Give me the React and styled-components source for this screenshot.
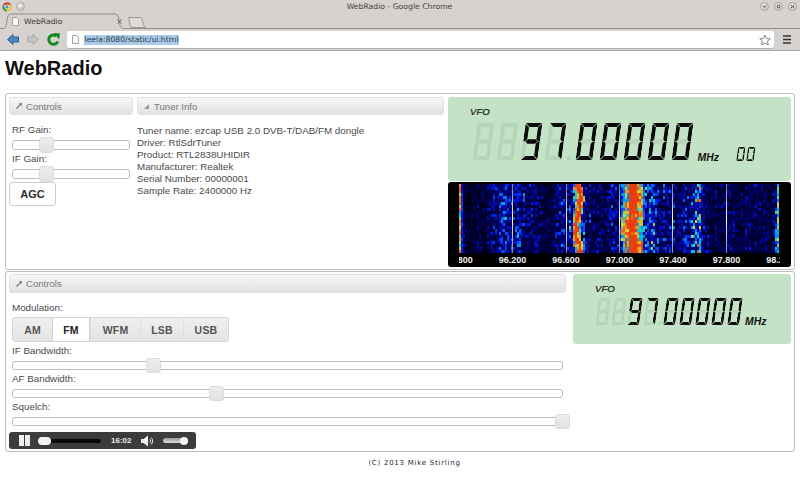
import React from "react";
import styled, { createGlobalStyle } from "styled-components";

const GlobalStyle = createGlobalStyle`
  html, body {
    margin: 0;
    height: 100%;
    overflow: hidden;
    background: #fff;
    font-family: "Liberation Sans", Arial, sans-serif;
    color: #333;
  }
  * { box-sizing: border-box; }
`;

/* ---------- browser chrome ---------- */

const Browser = styled.div`
  background: #d6d2cf;
  font-family: "DejaVu Sans", sans-serif;
  color: #3c3b3a;
`;

const TitleBar = styled.div`
  height: 13px;
  display: flex;
  align-items: center;
  padding: 0 3px 0 2px;
  position: relative;
`;

const WindowTitle = styled.div`
  flex: 1;
  padding-left: 19px;
  text-align: center;
  font-size: 7.7px;
  line-height: 13px;
  color: #444;
`;

const CircleButton = styled.span`
  width: 9px;
  height: 9px;
  border-radius: 50%;
  background: radial-gradient(circle at 40% 35%, #f4f2f0, #b9b5b2);
  border: 1px solid #aaa6a3;
  display: flex;
  align-items: center;
  justify-content: center;
  margin-left: ${(p) => p.$left || 5}px;
`;

const TabStrip = styled.div`
  height: 16px;
  display: flex;
  align-items: flex-end;
  padding-left: 2px;
  border-bottom: 1px solid #8f8b88;
`;

const Tab = styled.div`
  position: relative;
  width: 124px;
  height: 16px;
  margin-bottom: -1px;
  display: flex;
  align-items: center;
  gap: 5px;
  padding: 0 4px 0 10px;
  font-size: 7.7px;
  svg.shape { position: absolute; left: 0; top: 0; }
  svg.fav, span { position: relative; }
  span { flex: 1; }
`;

const Toolbar = styled.div`
  height: 22px;
  display: flex;
  align-items: center;
  padding: 0 9px 0 7px;
  border-bottom: 1px solid #a9a6a3;
`;

const Omnibox = styled.div`
  flex: 1;
  height: 17px;
  margin: 0 9px 0 7px;
  background: #fff;
  border-radius: 2px;
  box-shadow: 0 1px 0 #b5b2af;
  display: flex;
  align-items: center;
  padding: 0 3px 0 5px;
  gap: 5px;
`;

const Url = styled.span`
  background: #a9cbe9;
  color: #2b3a48;
  font-size: 7.7px;
  line-height: 10px;
  padding: 0 0.5px;
`;

const Spacer = styled.div`
  flex: 1;
`;

const ToolIcon = styled.svg`
  display: block;
  margin-right: ${(p) => p.$right || 0}px;
`;

/* ---------- page ---------- */

const Page = styled.div`
  padding: 0 5px;
`;

const Title = styled.h1`
  margin: 0 0 8px;
  height: 34px;
  line-height: 34px;
  font-size: 20px;
  font-weight: bold;
  color: #111;
`;

const Panel = styled.section`
  height: ${(p) => p.$height}px;
  margin-bottom: 1px;
  border: 1px solid #bdbdbd;
  border-radius: 3px;
  padding: ${(p) => p.$pad};
  display: flex;
  gap: ${(p) => p.$gap}px;
  position: relative;
`;

const Column = styled.div`
  width: ${(p) => p.$width}px;
  flex: none;
  display: flex;
  flex-direction: column;
  gap: ${(p) => p.$gap || 0}px;
`;

const SectionHeader = styled.div`
  height: ${(p) => p.$height || 18}px;
  flex: none;
  display: flex;
  align-items: center;
  gap: 4px;
  padding-left: 6px;
  border: 1px solid #e0e0e0;
  border-radius: 3px;
  background: linear-gradient(#f7f7f7, #ececec 50%, #e2e2e2);
  color: #7a7a7a;
  font-size: 9.6px;
`;

const Form = styled.div`
  padding: ${(p) => p.$top}px 3px 0;
`;

const FieldLabel = styled.div`
  height: 12px;
  line-height: 12px;
  font-size: 9.8px;
  color: #4a4a4a;
`;

const Track = styled.div`
  position: relative;
  height: ${(p) => p.$height}px;
  margin: 4px 0 3px;
  border: 1px solid #bdbdbd;
  border-radius: 3px;
  background: #fff;
`;

const Handle = styled.span`
  position: absolute;
  top: -4px;
  bottom: -4px;
  width: 15px;
  margin-left: -7.5px;
  border: 1px solid #dcdcdc;
  border-radius: 3px;
  background: linear-gradient(#ededed, #e2e2e2);
`;

const AgcButton = styled.button`
  display: block;
  width: 47px;
  height: 24px;
  margin-left: -3px;
  padding: 0;
  border: 1px solid #cfcfcf;
  border-radius: 3px;
  background: #fff;
  color: #2e2e2e;
  font: bold 11px "Liberation Sans", sans-serif;
`;

const TunerInfo = styled.div`
  padding-top: 10px;
  font-size: 9.8px;
  line-height: 12px;
  color: #4a4a4a;
`;

const ButtonSet = styled.div`
  display: flex;
  height: 25px;
  width: 217px;
  border: 1px solid #d6d6d6;
  border-radius: 3px;
  margin: 3px 0;
  background: linear-gradient(#efefef, #e4e4e4);
`;

const ModeButton = styled.div`
  width: ${(p) => p.$width}px;
  display: flex;
  align-items: center;
  justify-content: center;
  font-size: 10.5px;
  font-weight: bold;
  letter-spacing: 0.2px;
  color: ${(p) => (p.$active ? "#222" : "#555")};
  background: ${(p) => (p.$active ? "#fff" : "transparent")};
  border-left: 1px solid ${(p) => (p.$active ? "#cfcfcf" : "#dedede")};
  border-right: ${(p) => (p.$active ? "1px solid #cfcfcf" : "0")};
  &:first-child { border-left: 0; }
`;

/* ---------- audio player ---------- */

const AudioBar = styled.div`
  width: 187px;
  height: 19px;
  margin-top: 3px;
  display: flex;
  align-items: center;
  padding-left: 10px;
  border-radius: 3px;
  background: #3c3c3c;
`;

const PauseBar = styled.span`
  width: 4.5px;
  height: 11px;
  margin-right: 1.5px;
  background: #eee;
`;

const SeekTrack = styled.div`
  width: 62px;
  height: 4px;
  margin-left: 8px;
  background: #0a0a0a;
  border-radius: 2px;
  position: relative;
`;

const SeekThumb = styled.span`
  position: absolute;
  left: -1px;
  top: -2px;
  width: 13px;
  height: 8px;
  border-radius: 4px;
  background: #f2f2f2;
`;

const Time = styled.span`
  margin: 0 10px;
  color: #eee;
  font-size: 8px;
  font-weight: bold;
`;

const VolumeTrack = styled.div`
  width: 25px;
  height: 5px;
  margin-left: 8px;
  border-radius: 3px;
  background: linear-gradient(#999, #ddd);
  position: relative;
`;

const VolumeThumb = styled.span`
  position: absolute;
  right: 0;
  top: -1.5px;
  width: 8px;
  height: 8px;
  border-radius: 50%;
  background: #f4f4f4;
`;

const Footer = styled.footer`
  padding: 5px 0 0 29px;
  text-align: center;
  font: 7px/10px "DejaVu Sans", sans-serif;
  letter-spacing: 0.75px;
  color: #1c2a3a;
`;

/* ---------- LCD ---------- */

const Lcd = styled.div`
  height: ${(p) => p.$height}px;
  flex: none;
  padding: 9px 0 0 22px;
  border-radius: 3px;
  background: #c4e2c5;
  color: #111;
`;

const VfoLabel = styled.div`
  height: 12px;
  line-height: 12px;
  font-size: 9.6px;
  font-style: italic;
  -webkit-text-stroke: 0.2px #111;
`;

const DigitRow = styled.div`
  display: flex;
  align-items: flex-end;
  margin: ${(p) => p.$top}px 0 0 ${(p) => p.$left}px;
`;

const DigitBox = styled.span`
  --t: ${(p) => p.$t}px;
  flex: none;
  display: grid;
  width: ${(p) => p.$w}px;
  height: ${(p) => p.$h}px;
  margin-right: ${(p) => p.$gap}px;
  grid-template-columns: var(--t) 1fr var(--t);
  grid-template-rows: var(--t) 1fr var(--t) 1fr var(--t);
  transform: skewX(-8deg);
`;

const SEGMENT_SHAPES = {
  a: ["1 / 1 / 2 / 4", "polygon(0.6px 0, calc(100% - 0.6px) 0, calc(100% - var(--t) - 0.4px) 100%, calc(var(--t) + 0.4px) 100%)"],
  d: ["5 / 1 / 6 / 4", "polygon(calc(var(--t) + 0.4px) 0, calc(100% - var(--t) - 0.4px) 0, calc(100% - 0.6px) 100%, 0.6px 100%)"],
  g: ["3 / 1 / 4 / 4", "polygon(calc(var(--t) + 0.3px) 0, calc(100% - var(--t) - 0.3px) 0, calc(100% - var(--t) / 2 - 0.3px) 50%, calc(100% - var(--t) - 0.3px) 100%, calc(var(--t) + 0.3px) 100%, calc(var(--t) / 2 + 0.3px) 50%)"],
  f: ["1 / 1 / 4 / 2", "polygon(0 0.6px, 100% calc(var(--t) + 0.4px), 100% calc(100% - var(--t) - 0.3px), 50% calc(100% - var(--t) / 2 - 0.2px), 0 calc(100% - var(--t) / 2 - 0.2px))"],
  b: ["1 / 3 / 4 / 4", "polygon(100% 0.6px, 0 calc(var(--t) + 0.4px), 0 calc(100% - var(--t) - 0.3px), 50% calc(100% - var(--t) / 2 - 0.2px), 100% calc(100% - var(--t) / 2 - 0.2px))"],
  e: ["3 / 1 / 6 / 2", "polygon(0 calc(var(--t) / 2 + 0.2px), 50% calc(var(--t) / 2 + 0.2px), 100% calc(var(--t) + 0.3px), 100% calc(100% - var(--t) - 0.4px), 0 calc(100% - 0.6px))"],
  c: ["3 / 3 / 6 / 4", "polygon(100% calc(var(--t) / 2 + 0.2px), 50% calc(var(--t) / 2 + 0.2px), 0 calc(var(--t) + 0.3px), 0 calc(100% - var(--t) - 0.4px), 100% calc(100% - 0.6px))"],
};

const Segment = styled.i`
  grid-area: ${(p) => SEGMENT_SHAPES[p.$name][0]};
  clip-path: ${(p) => SEGMENT_SHAPES[p.$name][1]};
  background: ${(p) => (p.$on ? "#0b0b0b" : "#b4d4b7")};
`;

const DecimalDot = styled.span`
  flex: none;
  width: ${(p) => p.$width}px;
  height: ${(p) => p.$size}px;
  display: flex;
  justify-content: flex-start;
  &::before {
    content: "";
    width: ${(p) => p.$size}px;
    height: ${(p) => p.$size}px;
    margin-left: ${(p) => -p.$size}px;
    background: #b4d4b7;
    border-radius: 1px;
  }
`;

const ScreenReaderText = styled.span`
  position: absolute;
  width: 1px;
  height: 1px;
  overflow: hidden;
  clip-path: inset(50%);
`;

const Unit = styled.span`
  flex: none;
  margin-bottom: ${(p) => p.$drop}px;
  font-size: 10.4px;
  line-height: 10px;
  font-weight: bold;
  font-style: italic;
`;

const SmallDigits = styled.div`
  display: flex;
  margin: 0 0 -1px 18px;
`;

/* "-" is a digit position that is not lit: only the faint segments show */
const DIGIT_SEGMENTS = {
  "-": "",
  0: "abcdef",
  7: "abc",
  9: "abcdfg",
};

const Digit = ({ value, w, h, t, gap }) => (
  <DigitBox $w={w} $h={h} $t={t} $gap={gap} aria-hidden="true">
    {Object.keys(SEGMENT_SHAPES).map((name) => (
      <Segment key={name} $name={name} $on={DIGIT_SEGMENTS[value].includes(name)} />
    ))}
  </DigitBox>
);

const Frequency = ({ w, h, t, gap, dot, dotSize }) => (
  <>
    <ScreenReaderText>97.00000</ScreenReaderText>
    {["-", "-", 9, 7].map((d, i) => (
      <Digit key={i} value={d} w={w} h={h} t={t} gap={gap} />
    ))}
    <DecimalDot $width={dot} $size={dotSize} />
    {[0, 0, 0, 0, 0].map((d, i) => (
      <Digit key={i} value={d} w={w} h={h} t={t} gap={gap} />
    ))}
  </>
);

/* ---------- waterfall ---------- */

const WaterfallBox = styled.div`
  height: 85px;
  flex: none;
  padding: 2px 11px 0;
  border-radius: 3px;
  background: #000;
`;

const WaterfallPlot = styled.svg`
  display: block;
  background: #000;
`;

const Axis = styled.div`
  width: 321px;
  height: 14px;
  display: flex;
  justify-content: space-between;
  overflow: hidden;
  color: #eee;
  font-size: 9px;
  font-weight: bold;
  line-height: 14px;
`;

const Tick = styled.span`
  width: 0;
  display: flex;
  justify-content: center;
  white-space: nowrap;
`;

const gauss = (x, c, s, a) => a * Math.exp(-((x - c) * (x - c)) / (2 * s * s));

const envelope = (x, drift) =>
  0.16 +
  gauss(x, 1, 2.5, 0.7) +
  gauss(x, 55, 14, 0.3) +
  gauss(x, 119 + drift, 2.4, 0.85) +
  gauss(x, 116, 11, 0.32) +
  gauss(x, 173 + drift, 6.5, 0.72) +
  gauss(x, 178, 17, 0.4) +
  gauss(x, 228, 18, 0.16) +
  gauss(x, 240, 5, 0.28) +
  gauss(x, 290, 20, 0.07) +
  gauss(x, 319, 1.6, 0.75);

const jet = (v) => {
  const stops = [
    [0, 0, 0, 0],
    [0.22, 0, 0, 110],
    [0.4, 0, 20, 225],
    [0.55, 0, 120, 255],
    [0.68, 0, 200, 220],
    [0.8, 230, 210, 40],
    [1, 235, 60, 15],
  ];
  const i = stops.findIndex((s) => v <= s[0]);
  if (i <= 0) return v <= 0 ? "rgb(0,0,0)" : "rgb(235,60,15)";
  const [a, b] = [stops[i - 1], stops[i]];
  const f = (v - a[0]) / (b[0] - a[0]);
  const c = [1, 2, 3].map((k) => Math.round(a[k] + (b[k] - a[k]) * f));
  return `rgb(${c.join(",")})`;
};

const buildCells = () => {
  let seed = 20130297;
  const rand = () => {
    seed = (seed + 0x6d2b79f5) | 0;
    let t = Math.imul(seed ^ (seed >>> 15), 1 | seed);
    t = (t + Math.imul(t ^ (t >>> 7), 61 | t)) ^ t;
    return ((t ^ (t >>> 14)) >>> 0) / 4294967296;
  };
  const cols = Array.from({ length: 160 }, () => 0.6 + rand() * 0.55);
  const cells = [];
  for (let r = 0; r < 23; r++) {
    const drift = Math.sin(r / 3) * 2;
    for (let c = 0; c < 160; c++) {
      const env = envelope(c * 2 + 1, drift);
      const noise = rand();
      // strong carriers stay hot, the noise floor is speckled
      const spread = env > 0.65 ? 0.72 + noise * 0.45 : 0.35 + noise * noise * 1.3;
      const v = Math.min(1, env * cols[c] * spread);
      if (v > 0.05) cells.push({ x: c * 2, y: r * 3, fill: jet(v) });
    }
  }
  return cells;
};

const CELLS = buildCells();
const CARRIERS = [53, 107, 160, 213, 267];
const TICKS = ["95.800", "96.200", "96.600", "97.000", "97.400", "97.800", "98.200"];

const Waterfall = () => (
  <WaterfallBox>
    <WaterfallPlot width="321" height="69" viewBox="0 0 321 69">
      <defs>
        <filter id="soft" x="0" y="0" width="100%" height="100%">
          <feGaussianBlur stdDeviation="0.75" />
        </filter>
        <linearGradient id="carrier" x1="0" y1="0" x2="0" y2="1">
          <stop offset="0" stopColor="#777" />
          <stop offset="0.5" stopColor="#fff" />
          <stop offset="1" stopColor="#888" />
        </linearGradient>
      </defs>
      <g filter="url(#soft)">
        {CELLS.map((cell) => (
          <rect key={`${cell.x}-${cell.y}`} x={cell.x} y={cell.y} width="2" height="3" fill={cell.fill} />
        ))}
      </g>
      {CARRIERS.map((x) => (
        <rect key={x} x={x} y="0" width="1" height="69" fill="url(#carrier)" />
      ))}
    </WaterfallPlot>
    <Axis>
      {TICKS.map((t) => (
        <Tick key={t}>{t}</Tick>
      ))}
    </Axis>
  </WaterfallBox>
);

/* ---------- small drawings ---------- */

const Wrench = () => (
  <svg width="6" height="6" viewBox="0 0 6 6" style={{ flex: "none" }}>
    <path d="M0.5 5.5 L3.5 2.5 M3 1.2 L5.5 0.8 L4.8 3" stroke="#777" strokeWidth="1.2" fill="none" />
  </svg>
);

const Corner = () => (
  <svg width="6" height="5" viewBox="0 0 6 5" style={{ flex: "none" }}>
    <path d="M5 0 V5 H0 Z" fill="#999" />
  </svg>
);

const DocIcon = ({ className }) => (
  <svg className={className} width="7" height="9" viewBox="0 0 7 9" style={{ flex: "none" }}>
    <path d="M0.5 0.5 H4.5 L6.5 2.5 V8.5 H0.5 Z" fill="#fafafa" stroke="#a3a3a3" />
  </svg>
);

const ChromeLogo = () => (
  <svg width="10" height="10" viewBox="0 0 20 20">
    <path d="M10 10 L2 5 A9.6 9.6 0 0 1 18.6 5.5 L10 5.5 Z" fill="#d9412f" />
    <path d="M10 10 L18.6 5.5 A9.6 9.6 0 0 1 9 19.6 L13 12.5 Z" fill="#f5c518" />
    <path d="M10 10 L9 19.6 A9.6 9.6 0 0 1 2 5 L6.5 12.5 Z" fill="#3f9e44" />
    <circle cx="10" cy="10" r="4.6" fill="#fff" />
    <circle cx="10" cy="10" r="3.5" fill="#4c8bf0" />
  </svg>
);

const VolumeIcon = () => (
  <svg width="14" height="12" viewBox="0 0 14 12" style={{ flex: "none" }}>
    <path d="M0 4 H2.5 L7 0.5 V11.5 L2.5 8 H0 Z" fill="#f0f0f0" />
    <path d="M8.5 4 A2.5 2.5 0 0 1 8.5 8 M10 2.5 A4.5 4.5 0 0 1 10 9.5" stroke="#e8e8e8" fill="none" />
  </svg>
);

const Slider = ({ value, height }) => (
  <Track $height={height}>
    <Handle style={{ left: `${value}%` }} />
  </Track>
);

const MODES = [
  { name: "AM", width: 39 },
  { name: "FM", width: 38, active: true },
  { name: "WFM", width: 50 },
  { name: "LSB", width: 43 },
  { name: "USB", width: 45 },
];

const TUNER_LINES = [
  "Tuner name: ezcap USB 2.0 DVB-T/DAB/FM dongle",
  "Driver: RtlSdrTuner",
  "Product: RTL2838UHIDIR",
  "Manufacturer: Realtek",
  "Serial Number: 00000001",
  "Sample Rate: 2400000 Hz",
];

const App = () => (
  <>
    <GlobalStyle />
    <Browser>
      <TitleBar>
        <ChromeLogo />
        <CircleButton $left={4} />
        <WindowTitle>WebRadio - Google Chrome</WindowTitle>
        <CircleButton>
          <svg width="5" height="5" viewBox="0 0 5 5"><path d="M1 1.5 L2.5 3.5 L4 1.5" stroke="#444" fill="none" /></svg>
        </CircleButton>
        <CircleButton>
          <svg width="5" height="5" viewBox="0 0 5 5"><circle cx="2.5" cy="2.5" r="1.4" stroke="#444" fill="none" /></svg>
        </CircleButton>
        <CircleButton>
          <svg width="5" height="5" viewBox="0 0 5 5"><path d="M1 1 L4 4 M4 1 L1 4" stroke="#444" /></svg>
        </CircleButton>
      </TitleBar>
      <TabStrip>
        <Tab>
          <svg className="shape" width="124" height="16" viewBox="0 0 124 16">
            <path d="M0 16 C4 16 4 13 5.5 5 C6 2 7 1 10 1 H112 C115 1 116 2 116.5 5 C118 13 118 16 124 16" fill="#d6d2cf" stroke="#8f8b88" />
          </svg>
          <DocIcon className="fav" />
          <span>WebRadio</span>
          <svg className="fav" width="5" height="5" viewBox="0 0 5 5">
            <path d="M0.5 0.5 L4.5 4.5 M4.5 0.5 L0.5 4.5" stroke="#555" />
          </svg>
        </Tab>
        <svg width="18" height="11" viewBox="0 0 18 11" style={{ marginLeft: 2 }}>
          <path d="M0.5 0.5 H12 C14 0.5 14 2 15 6 C15.5 8 16 10 17.5 10.5 H4 C2.5 10 2 8 1.5 5 Z" fill="#dedad7" stroke="#9d9996" />
        </svg>
      </TabStrip>
      <Toolbar>
        <ToolIcon width="12" height="11" viewBox="0 0 12 11" $right={8}>
          <path d="M0.5 5.5 L6 0.5 V3 H11.5 V8 H6 V10.5 Z" fill="#4f86c6" stroke="#2c5c94" />
        </ToolIcon>
        <ToolIcon width="12" height="11" viewBox="0 0 12 11" $right={8}>
          <path d="M11.5 5.5 L6 0.5 V3 H0.5 V8 H6 V10.5 Z" fill="#c4c4c2" stroke="#a8a8a6" />
        </ToolIcon>
        <ToolIcon width="13" height="13" viewBox="0 0 13 13">
          <path d="M10.8 8.5 A4.7 4.7 0 1 1 9.5 3" fill="none" stroke="#118a1e" strokeWidth="3" />
          <path d="M7 0 L13 0.5 L12 6.5 Z" fill="#118a1e" />
        </ToolIcon>
        <Omnibox>
          <DocIcon />
          <Url>leela:8080/static/ui.html</Url>
          <Spacer />
          <svg width="12" height="12" viewBox="0 0 24 24">
            <path d="M12 2 L15 9 L22.5 9.6 L16.8 14.5 L18.6 22 L12 18 L5.4 22 L7.2 14.5 L1.5 9.6 L9 9 Z" fill="#fff" stroke="#777" strokeWidth="1.8" />
          </svg>
        </Omnibox>
        <ToolIcon width="8" height="9" viewBox="0 0 8 9">
          <path d="M0 1 H8 M0 4.5 H8 M0 8 H8" stroke="#333" strokeWidth="1.6" />
        </ToolIcon>
      </Toolbar>
    </Browser>

    <Page>
      <Title>WebRadio</Title>

      <Panel $height={177} $pad="3px" $gap={4}>
        <Column $width={124}>
          <SectionHeader>
            <Wrench />
            Controls
          </SectionHeader>
          <Form $top={9}>
            <FieldLabel>RF Gain:</FieldLabel>
            <Slider value={29} height={10} />
            <FieldLabel>IF Gain:</FieldLabel>
            <Slider value={29} height={10} />
            <AgcButton>AGC</AgcButton>
          </Form>
        </Column>
        <Column $width={307}>
          <SectionHeader>
            <Corner />
            Tuner Info
          </SectionHeader>
          <TunerInfo>
            {TUNER_LINES.map((line) => (
              <div key={line}>{line}</div>
            ))}
          </TunerInfo>
        </Column>
        <Column $width={343} $gap={1}>
          <Lcd $height={84}>
            <VfoLabel>VFO</VfoLabel>
            <DigitRow $top={5} $left={5}>
              <Frequency w={17} h={37} t={4.4} gap={7} dot={6.5} dotSize={4} />
              <Unit $drop={-3}>MHz</Unit>
              <SmallDigits>
                <Digit value={0} w={7.5} h={14} t={1.7} gap={2.5} />
                <Digit value={0} w={7.5} h={14} t={1.7} gap={0} />
              </SmallDigits>
            </DigitRow>
          </Lcd>
          <Waterfall />
        </Column>
      </Panel>

      <Panel $height={181} $pad="2px 3px" $gap={7}>
        <Column $width={557}>
          <SectionHeader $height={19}>
            <Wrench />
            Controls
          </SectionHeader>
          <Form $top={9}>
            <FieldLabel>Modulation:</FieldLabel>
            <ButtonSet>
              {MODES.map((mode) => (
                <ModeButton key={mode.name} $width={mode.width} $active={mode.active}>
                  {mode.name}
                </ModeButton>
              ))}
            </ButtonSet>
            <FieldLabel>IF Bandwidth:</FieldLabel>
            <Slider value={25.6} height={9} />
            <FieldLabel>AF Bandwidth:</FieldLabel>
            <Slider value={37} height={9} />
            <FieldLabel>Squelch:</FieldLabel>
            <Slider value={100} height={9} />
          </Form>
          <AudioBar>
            <PauseBar />
            <PauseBar />
            <SeekTrack>
              <SeekThumb />
            </SeekTrack>
            <Time>16:02</Time>
            <VolumeIcon />
            <VolumeTrack>
              <VolumeThumb />
            </VolumeTrack>
          </AudioBar>
        </Column>
        <Column $width={218}>
          <Lcd $height={70}>
            <VfoLabel>VFO</VfoLabel>
            <DigitRow $top={3} $left={2}>
              <Frequency w={12} h={27} t={3} gap={4} dot={4} dotSize={3} />
              <Unit $drop={-2}>MHz</Unit>
            </DigitRow>
          </Lcd>
        </Column>
      </Panel>

      <Footer>(C) 2013 Mike Stirling</Footer>
    </Page>
  </>
);

export default App;
